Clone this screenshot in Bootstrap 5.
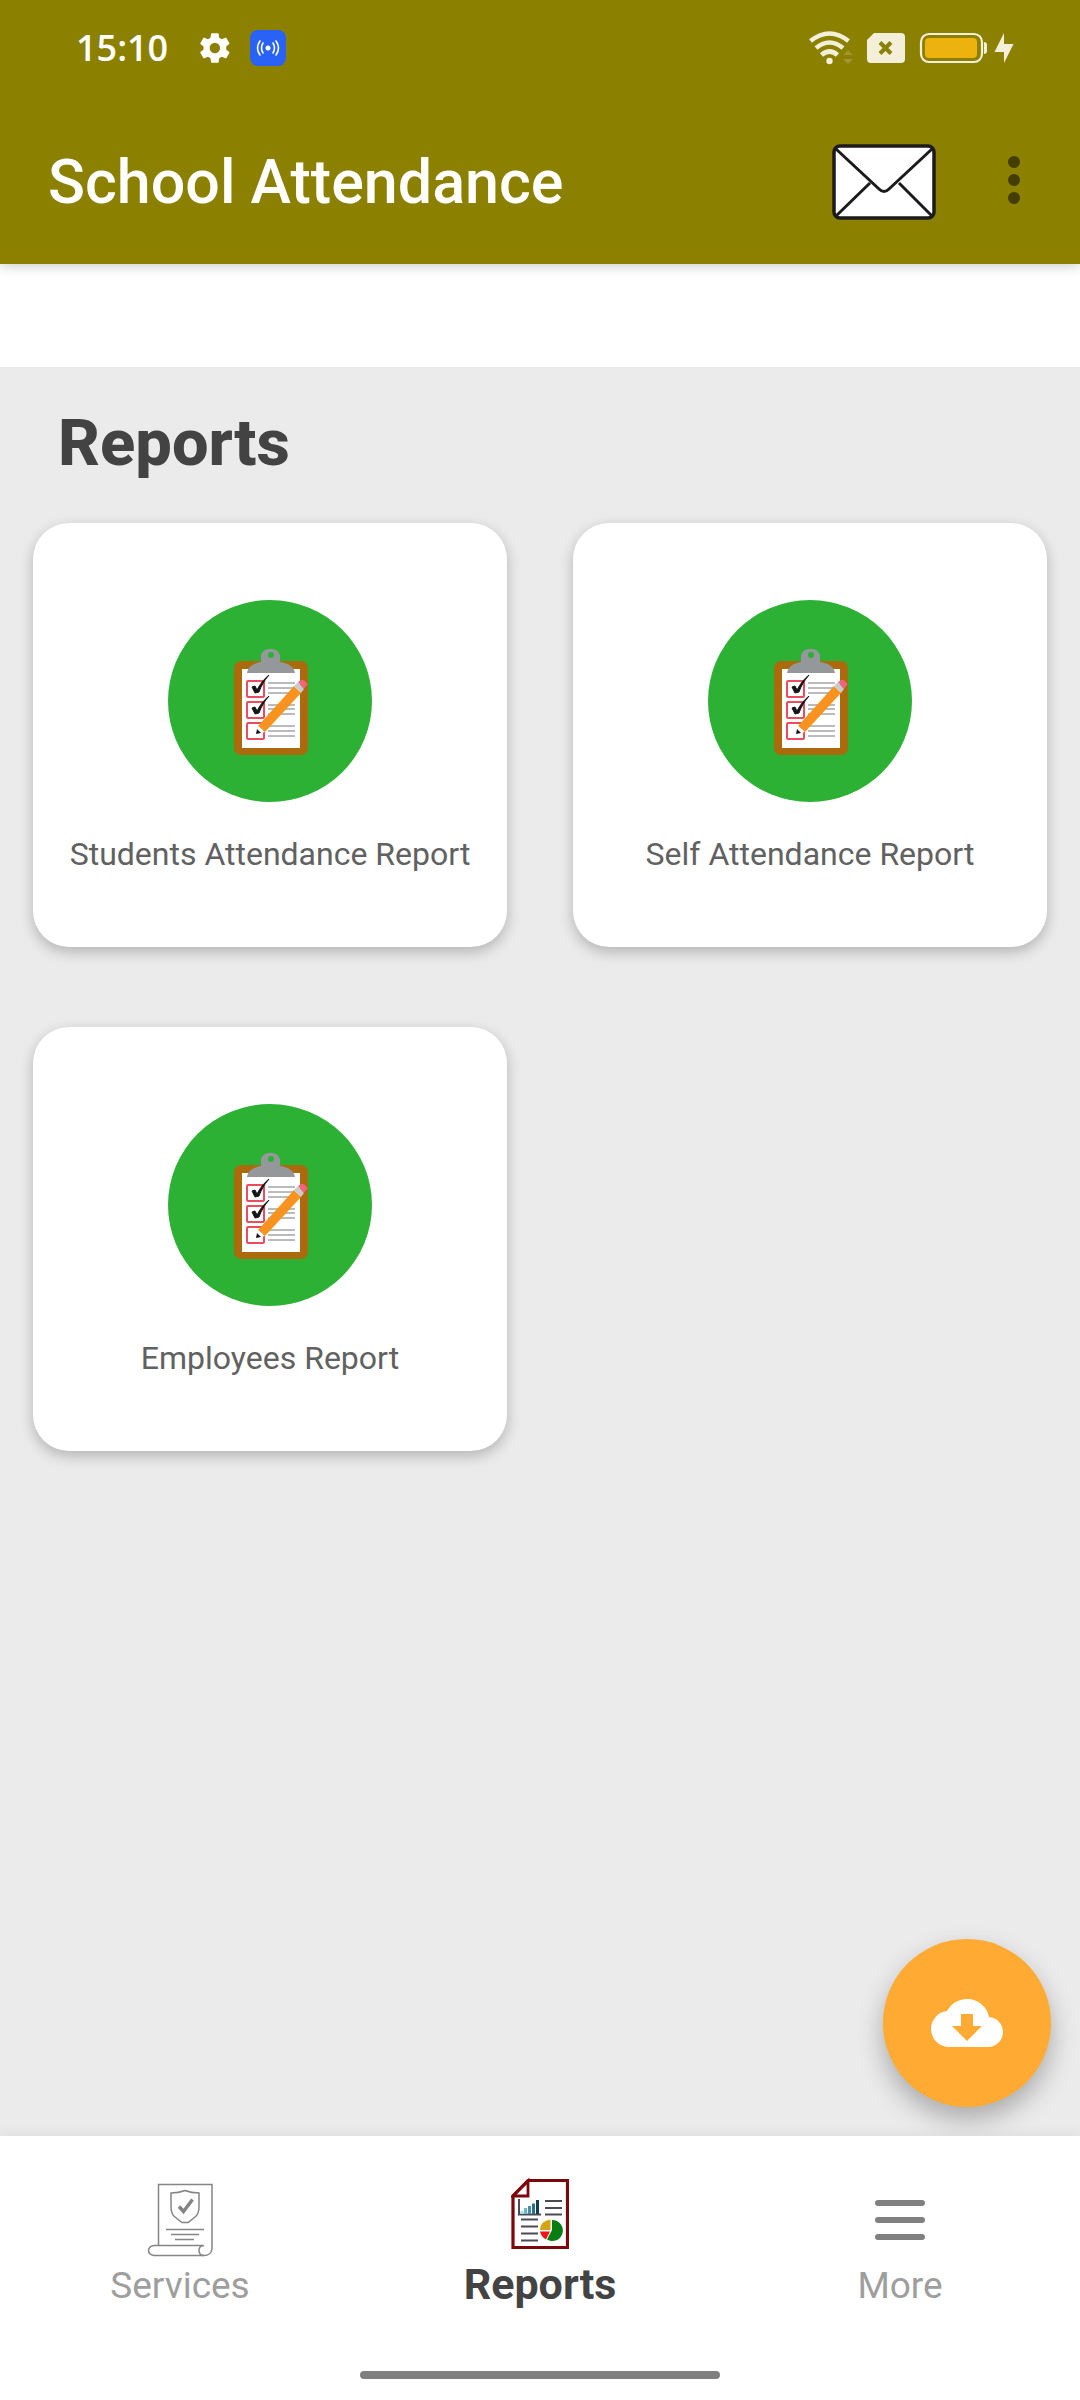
<!DOCTYPE html>
<html lang="en">
<head>
<meta charset="utf-8">
<meta name="viewport" content="width=device-width, initial-scale=1">
<title>School Attendance</title>
<link href="https://cdn.jsdelivr.net/npm/bootstrap@5.3.0/dist/css/bootstrap.min.css" rel="stylesheet">
<style>
  body { font-family: Roboto, "Liberation Sans", sans-serif; background: #fff; }
  svg { display: block; flex: none; }
  .top-area { background: #8b8000; box-shadow: 0 2px 12px rgba(0,0,0,.2); z-index: 2; }
  .status-bar { height: 96px; padding: 0 66px 0 76px; }
  .clock { font: 600 36px/48px "Open Sans", "Noto Sans", sans-serif; }
  .status-left { gap: 12px; padding-left: 24px; }
  .app-bar { height: 168px; padding: 4px 48px 0; }
  .app-title { font-size: 61px; line-height: 72px; font-weight: 500; }
  .app-actions { gap: 60px; }
  .blank-strip { height: 103px; }
  .page-body { background: #ebebeb; padding-bottom: 240px; }
  .page-title { font-size: 65px; line-height: 76px; font-weight: 800; color: #434343; margin: 0; padding: 38px 58px 42px; }
  .tiles { --bs-gutter-x: 66px; --bs-gutter-y: 80px; }
  .tiles-wrap { padding: 0 33px; }
  .tile { height: 424px; border: 0; border-radius: 36px; box-shadow: 0 5px 14px rgba(0,0,0,.24); color: #616161; gap: 28px; padding-top: 8px; }
  .tile-label { font-size: 32px; line-height: 48px; }
  .fab { position: absolute; right: 29px; bottom: 29px; width: 168px; height: 168px; background: #ffaa33; box-shadow: 0 12px 26px rgba(0,0,0,.28); }
  .bottom-bar { z-index: 3; background: #fff; box-shadow: 0 -2px 12px rgba(0,0,0,.06); }
  .tab { height: 190px; padding-top: 42px; color: #9e9e9e; font-size: 37px; line-height: 44px; gap: 2px; }
  .tab.active { padding-top: 36px; gap: 6px; color: #434343; font-size: 43px; font-weight: 700; }
  .tab-icon { height: 84px; }
  .home-area { height: 74px; padding-top: 45px; }
  .home-handle { width: 33.333%; height: 8px; border-radius: 4px; background: #7f7f7f; }
</style>
</head>
<body class="d-flex flex-column min-vh-100">

<svg width="0" height="0" class="position-absolute" aria-hidden="true">
  <symbol id="clipboard" viewBox="0 0 204 202">
    <ellipse cx="102" cy="101" rx="102" ry="101" fill="#2db135"/>
    <rect x="66" y="61" width="74" height="94" rx="7" fill="#ab6a0c"/>
    <path d="M74 69h58v79H74z" fill="#fff"/>
    <path d="M79 73c1-7 8-10 14-11V55a10 9 0 0 1 19 0v7c7 1 14 4 15 11z" fill="#95989a"/>
    <circle cx="103" cy="55" r="3" fill="#2db135"/>
    <g fill="none" stroke="#ed4c5c" stroke-width="2">
      <rect x="79" y="81" width="17" height="16" rx="1"/><rect x="79" y="102" width="17" height="16" rx="1"/><rect x="79" y="123" width="17" height="16" rx="1"/>
    </g>
    <g stroke="#a3a5a7" stroke-width="1.6">
      <path d="M100 83h27M100 88h27M100 93h27M100 105h27M100 109h27M100 114h27M100 126h27M100 131h27M100 136h27"/>
    </g>
    <g fill="#151515" stroke="#151515" stroke-width="1">
      <path d="M84 87l3-1 2 4c3-6 7-11 12-15-5 6-8 11-10 17l-4 1z"/>
      <path d="M84 108l3-1 2 4c3-6 7-11 12-15-5 6-8 11-10 17l-4 1z"/>
    </g>
    <path d="M126 86l7 7-36 39-7-6z" fill="#f7931e"/>
    <path d="M90 126l7 6-9 2z" fill="#fff"/><path d="M89 129l4 4-5 1z" fill="#151515"/>
    <path d="M130 82l6 7-3 4-7-7z" fill="#c9ccce"/>
    <path d="M133 80q2-1 5 2t0 4l-2 3-6-7z" fill="#f0647c"/>
  </symbol>
</svg>

<header class="top-area position-relative text-white">
  <div class="status-bar d-flex align-items-center justify-content-between">
    <div class="d-flex align-items-center">
      <span class="clock">15:10</span>
      <div class="status-left d-flex align-items-center">
        <svg width="46" height="36" viewBox="0 0 46 36" role="img" aria-label="Settings">
          <path transform="translate(5 0) scale(1.5)" fill="#fff" fill-rule="evenodd" d="M19.400 13a7.500 7.500 0 0 0 .1-1 7.500 7.500 0 0 0-.1-1l2.100-1.600a.5.5 0 0 0 .1-.6l-2-3.500a.5.5 0 0 0-.6-.2l-2.500 1a7.300 7.300 0 0 0-1.700-1l-.4-2.600a.5.5 0 0 0-.5-.4h-4a.5.5 0 0 0-.5.4L9 5.100a7.700 7.700 0 0 0-1.700 1l-2.500-1a.5.5 0 0 0-.6.200l-2 3.500a.5.5 0 0 0 .1.600L4.400 11a7.900 7.900 0 0 0 0 2l-2.100 1.600a.5.5 0 0 0-.1.600l2 3.500a.5.5 0 0 0 .6.200l2.500-1a7.300 7.300 0 0 0 1.700 1l.4 2.600a.5.5 0 0 0 .5.400h4a.5.5 0 0 0 .5-.4l.4-2.600a7.700 7.700 0 0 0 1.700-1l2.500 1a.5.5 0 0 0 .6-.2l2-3.500a.5.5 0 0 0-.1-.6zM11.900 15.500a3.500 3.500 0 1 1 0-7 3.500 3.500 0 0 1 0 7z"/>
        </svg>
        <svg width="36" height="36" viewBox="0 0 36 36" role="img" aria-label="Hotspot">
          <rect width="36" height="36" rx="8" fill="#2962f5"/><circle cx="18" cy="18" r="2.500" fill="#fff"/>
          <path d="M13 13q-3 5 0 10M23 13q3 5 0 10M10 11q-5 7 0 14M26 11q5 7 0 14" fill="none" stroke="#fff" stroke-width="1.600" stroke-linecap="round"/>
        </svg>
      </div>
    </div>
    <svg width="206" height="36" viewBox="808 30 206 36" role="img" aria-label="Wi-Fi, no SIM, battery charging">
      <g fill="none" stroke="#f3efd9" stroke-width="4.600">
        <path d="M810.500 41q19-15 38 0M816 48q13.500-11 27 0M821.500 55q8-7 16 0"/>
      </g>
      <circle cx="829.500" cy="61" r="3.200" fill="#f3efd9"/>
      <path d="M848 50l5 5h-10zM848 64l5-5h-10z" fill="#a0952f"/>
      <path d="M874 33h27q4 0 4 4v22q0 4-4 4h-30q-4 0-4-4V40z" fill="#f3efd9"/>
      <path d="M880 42.500l11 11M891 42.500l-11 11" stroke="#8b8000" stroke-width="4"/>
      <rect x="921" y="34" width="61" height="28" rx="8" fill="none" stroke="#f3efd9" stroke-width="2.200"/>
      <rect x="925" y="38" width="52" height="20" rx="4" fill="#edb20d"/>
      <path d="M984 42q3 0 3 3v6q0 3-3 3z" fill="#f3efd9"/>
      <path d="M1004 33l-9.500 19h9.500v11l9.500-19H1004z" fill="#f3efd9"/>
    </svg>
  </div>
  <nav class="app-bar d-flex align-items-center justify-content-between" aria-label="App bar">
    <h1 class="app-title m-0">School Attendance</h1>
    <div class="app-actions d-flex align-items-center">
      <button class="btn p-0 border-0" type="button" aria-label="Messages">
        <svg width="104" height="76" viewBox="-1 -1 104 76">
          <rect x="1" y="1" width="100" height="72" rx="6" fill="#fff" stroke="#1b1b1b" stroke-width="3.500"/>
          <path d="M3 4l43 40q5 5 10 0L99 4M37 38L3 71M66 38l33 33" fill="none" stroke="#1b1b1b" stroke-width="3"/>
        </svg>
      </button>
      <button class="btn p-0 border-0" type="button" aria-label="More options">
        <svg width="36" height="76" viewBox="0 0 36 76"><g fill="#433d00"><circle cx="18" cy="18" r="6"/><circle cx="18" cy="36" r="6"/><circle cx="18" cy="54" r="6"/></g></svg>
      </button>
    </div>
  </nav>
</header>

<div class="blank-strip"></div>

<main class="page-body flex-grow-1 position-relative">
  <h2 class="page-title">Reports</h2>
  <div class="tiles-wrap">
    <div class="row row-cols-2 tiles">
      <div class="col"><a href="#students" class="tile card text-decoration-none align-items-center justify-content-center">
        <svg width="204" height="202"><use href="#clipboard"/></svg><span class="tile-label">Students Attendance Report</span></a></div>
      <div class="col"><a href="#self" class="tile card text-decoration-none align-items-center justify-content-center">
        <svg width="204" height="202"><use href="#clipboard"/></svg><span class="tile-label">Self Attendance Report</span></a></div>
      <div class="col"><a href="#employees" class="tile card text-decoration-none align-items-center justify-content-center">
        <svg width="204" height="202"><use href="#clipboard"/></svg><span class="tile-label">Employees Report</span></a></div>
    </div>
  </div>
  <button class="fab btn rounded-circle border-0 p-0 d-flex align-items-center justify-content-center" type="button" aria-label="Download">
    <svg width="72" height="72" viewBox="0 0 24 24"><path fill="#fff" fill-rule="evenodd" d="M19.350 10.040A7.490 7.490 0 0 0 12 4C9.110 4 6.600 5.640 5.350 8.040A5.994 5.994 0 0 0 0 14c0 3.310 2.690 6 6 6h13c2.760 0 5-2.240 5-5 0-2.640-2.050-4.780-4.650-4.960zM17 13l-5 5-5-5h3V9h4v4z"/></svg>
  </button>
</main>

<footer class="bottom-bar position-relative">
  <nav class="row g-0 text-center" aria-label="Sections">
    <a href="#services" class="col tab text-decoration-none d-flex flex-column align-items-center">
      <span class="tab-icon d-flex align-items-center">
        <svg width="66" height="74" viewBox="147 2183 66 74" fill="none" stroke="#858585" stroke-width="1.500">
          <path d="M158.500 2245v-60.500H212V2249q-1 6.500-8 6.500h-50q-5.500-1-5.500-5t5.500-5h49"/>
          <path d="M204 2245.500q-5 0-5 5t5 5"/>
          <path d="M171 2193q8 0 14-2.500 6 2.500 14 2.500v14q0 7-4 10l-7 5.500h-6l-7-5.500q-4-3-4-10z"/>
          <path d="M179 2206.500l4.500 5 9-12" stroke-width="3.500"/>
          <path d="M166 2229.500h38M171 2234.500h28M175 2239.500h19"/>
        </svg>
      </span>
      <span>Services</span>
    </a>
    <a href="#reports" class="col tab active text-decoration-none d-flex flex-column align-items-center" aria-current="page">
      <span class="tab-icon d-flex align-items-center">
        <svg width="58" height="78" viewBox="511 2174 58 78" fill="none">
          <path d="M528 2179.500h39.500v67H513v-51.500z" stroke="#7d080c" stroke-width="3.200"/>
          <path d="M528 2180v15h-15z" stroke="#7d080c" stroke-width="2.800"/>
          <path d="M519 2198v15.500h22M545 2200h17M545 2207h17M545 2213.500h17M521 2218.500h17M521 2225.500h17M521 2232.500h17M521 2239.500h17" stroke="#4b4b55" stroke-width="2"/>
          <path d="M520.500 2210h3v3h-3z" fill="#a6dde8"/><path d="M524 2207h3v6h-3z" fill="#69b7cf"/><path d="M528 2205h3v8h-3z" fill="#478da9"/><path d="M532 2202.500h3v10.500h-3z" fill="#2d6f87"/><path d="M536 2199h3v14h-3z" fill="#153c50"/>
          <path d="M552 2219v10l-5 9.500a10.500 10.500 0 1 0 5-19.500z" fill="#0a7d12"/>
          <path d="M550.500 2218.500v10.500H540q0-9 10.500-10.500z" fill="#d2a514"/>
          <path d="M540 2230.500h10l-4 8q-5-3-6-8z" fill="#f01418"/>
        </svg>
      </span>
      <span>Reports</span>
    </a>
    <a href="#more" class="col tab text-decoration-none d-flex flex-column align-items-center">
      <span class="tab-icon d-flex align-items-center">
        <svg width="52" height="74" viewBox="0 0 52 74" stroke="#808080" stroke-width="6" stroke-linecap="round"><path d="M4 20h44M4 37h44M4 54h44"/></svg>
      </span>
      <span>More</span>
    </a>
  </nav>
  <div class="home-area d-flex justify-content-center"><div class="home-handle"></div></div>
</footer>

<script src="https://cdn.jsdelivr.net/npm/bootstrap@5.3.0/dist/js/bootstrap.bundle.min.js"></script>
</body>
</html>
